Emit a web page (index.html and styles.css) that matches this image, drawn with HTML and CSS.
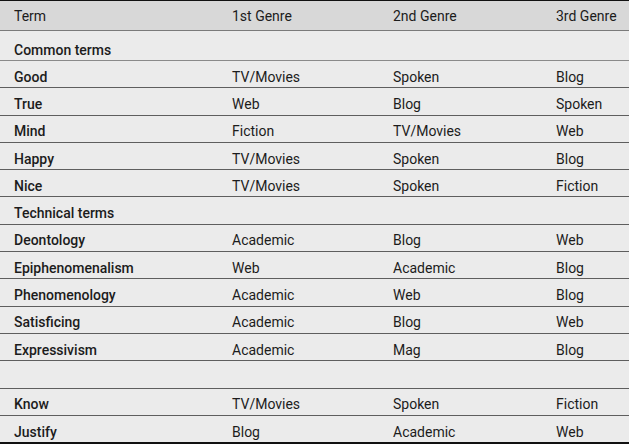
FILE: index.html
```html
<!DOCTYPE html>
<html>
<head>
<meta charset="utf-8">
<link rel="stylesheet" href="styles.css">
</head>
<body>
<table class="genres">
  <colgroup>
    <col class="c1"><col class="c2"><col class="c3"><col class="c4">
  </colgroup>
  <thead>
    <tr><th>Term</th><th>1st Genre</th><th>2nd Genre</th><th>3rd Genre</th></tr>
  </thead>
  <tbody>
    <tr class="section first"><td class="term">Common terms</td><td></td><td></td><td></td></tr>
    <tr><td class="term">Good</td><td>TV/Movies</td><td>Spoken</td><td>Blog</td></tr>
    <tr><td class="term">True</td><td>Web</td><td>Blog</td><td>Spoken</td></tr>
    <tr><td class="term">Mind</td><td>Fiction</td><td>TV/Movies</td><td>Web</td></tr>
    <tr><td class="term">Happy</td><td>TV/Movies</td><td>Spoken</td><td>Blog</td></tr>
    <tr><td class="term">Nice</td><td>TV/Movies</td><td>Spoken</td><td>Fiction</td></tr>
    <tr class="section"><td class="term">Technical terms</td><td></td><td></td><td></td></tr>
    <tr><td class="term">Deontology</td><td>Academic</td><td>Blog</td><td>Web</td></tr>
    <tr><td class="term">Epiphenomenalism</td><td>Web</td><td>Academic</td><td>Blog</td></tr>
    <tr><td class="term">Phenomenology</td><td>Academic</td><td>Web</td><td>Blog</td></tr>
    <tr><td class="term">Satisficing</td><td>Academic</td><td>Blog</td><td>Web</td></tr>
    <tr><td class="term">Expressivism</td><td>Academic</td><td>Mag</td><td>Blog</td></tr>
    <tr class="blank"><td></td><td></td><td></td><td></td></tr>
    <tr><td class="term">Know</td><td>TV/Movies</td><td>Spoken</td><td>Fiction</td></tr>
    <tr class="last"><td class="term">Justify</td><td>Blog</td><td>Academic</td><td>Web</td></tr>
  </tbody>
</table>
</body>
</html>
```
FILE: styles.css
```css
html, body {
  margin: 0;
  padding: 0;
  background: #ffffff;
}

.genres {
  width: 629px;
  border-collapse: collapse;
  table-layout: fixed;
  font-family: Roboto, "Noto Sans", sans-serif;
  font-size: 14px;
  color: #1c1c1c;
  background: #ebebeb;
}

.c1 { width: 218px; }
.c2 { width: 161px; }
.c3 { width: 163px; }
.c4 { width: 87px; }

.genres th {
  background: #d8d8d8;
  font-weight: normal;
  text-align: left;
  padding: 1px 0 0 14px;
  height: 28px;
  border-top: 1px solid #111;
  border-bottom: 1px solid #7a7a7a;
  white-space: nowrap;
}

.genres td {
  padding: 5px 0 0 14px;
  height: 21.3px;
  border-bottom: 1px solid #5e5e5e;
  white-space: nowrap;
}

.genres tr.first td {
  padding-top: 8px;
  height: 21px;
  border-bottom-color: #8a8a8a;
}

.genres td.term {
  font-weight: 500;
}

.genres tr.last td {
  border-bottom: 2px solid #111;
}
```
